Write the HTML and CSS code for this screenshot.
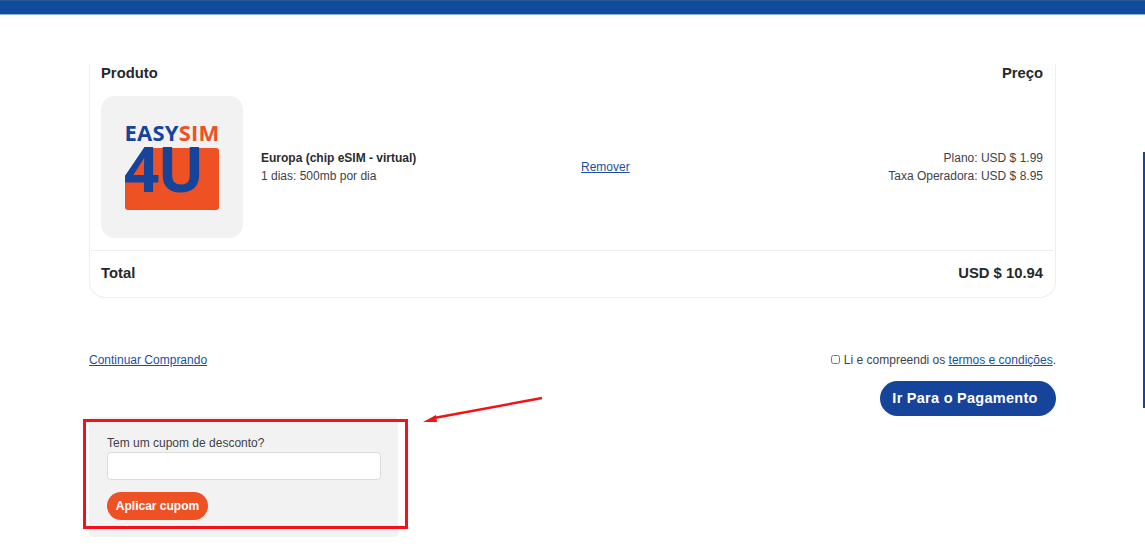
FILE: index.html
```html
<!DOCTYPE html>
<html lang="pt">
<head>
<meta charset="utf-8">
<title>Carrinho</title>
<link rel="stylesheet" href="styles.css">
</head>
<body>
<header class="topbar"></header>
<main class="page">
  <section class="card">
    <div class="row head">
      <span>Produto</span>
      <span>Preço</span>
    </div>
    <div class="item">
      <div class="thumb">
        <svg class="logo" viewBox="0 0 142 142" width="142" height="142" aria-label="EasySim4U">
          <path d="M52 52H115a3 3 0 0 1 3 3V111a3 3 0 0 1-3 3H27a3 3 0 0 1-3-3V80Z" fill="#ee5224"/>
          <text x="23.5" y="45" class="logo-top"><tspan fill="#15449a">EASY</tspan><tspan fill="#ee5224">SIM</tspan></text>
          <text x="23" y="96" class="logo-big" fill="#15449a">4U</text>
        </svg>
      </div>
      <div class="info">
        <strong>Europa (chip eSIM - virtual)</strong>
        <span>1 dias: 500mb por dia</span>
      </div>
      <a class="remove" href="#">Remover</a>
      <div class="prices">
        <span>Plano: USD $ 1.99</span>
        <span>Taxa Operadora: USD $ 8.95</span>
      </div>
    </div>
    <div class="row total">
      <span>Total</span>
      <span>USD $ 10.94</span>
    </div>
  </section>

  <section class="actions">
    <a href="#">Continuar Comprando</a>
    <div class="checkout">
      <label class="terms"><input type="checkbox">Li e compreendi os <a href="#">termos e condições</a>.</label>
      <button class="pay" type="button">Ir Para o Pagamento</button>
    </div>
  </section>

  <section class="coupon">
    <label for="cupom">Tem um cupom de desconto?</label>
    <input id="cupom" type="text">
    <button class="apply" type="button">Aplicar cupom</button>
  </section>
</main>

<div class="edge-line"></div>
<div class="mark-box"></div>
<svg class="mark-arrow" viewBox="0 0 130 30" width="130" height="30" aria-hidden="true">
  <line x1="120" y1="3" x2="12" y2="23" stroke="#f01414" stroke-width="2.4"/>
  <polygon points="1,27 14,20 15,27" fill="#f01414"/>
</svg>
</body>
</html>
```

FILE: styles.css
```css
* { box-sizing: border-box; }

html, body { margin: 0; padding: 0; }

body {
  height: 550px;
  overflow: hidden;
  background: #fff;
  color: #3f4248;
  font-family: "Liberation Sans", Arial, sans-serif;
  font-size: 12px;
  line-height: 18px;
}

a { color: #1c4f9c; text-decoration: underline; }

.topbar {
  height: 15px;
  background: #0f4c9e;
  border-top: 1px solid #2a5a96;
  border-bottom: 1px solid #8fb0d8;
}

.page {
  width: 967px;
  margin: 0 0 0 89px;
  padding-top: 49px;
}

.card {
  height: 234px;
  border: 1px solid #eee;
  border-top: 0;
  border-radius: 0 0 16px 16px;
  padding: 0 1px;
  display: flex;
  flex-direction: column;
}

.row {
  display: flex;
  justify-content: space-between;
  padding: 0 11px 0 10px;
  color: #26282c;
  font-weight: 700;
  font-size: 14.8px;
}

.head { height: 32px; align-items: flex-start; }

.item {
  display: grid;
  grid-template-columns: 142px 338px 1fr auto;
  align-items: center;
  height: 142px;
  padding: 0 11px 0 10px;
}

.thumb {
  width: 142px;
  height: 142px;
  background: #f2f2f2;
  border-radius: 14px;
}

.logo { display: block; }

.logo-top {
  font-family: "Open Sans", sans-serif;
  font-size: 22px;
  font-weight: 700;
  letter-spacing: 0.2px;
}

.logo-big {
  font-family: "Open Sans", sans-serif;
  font-size: 62px;
  font-weight: 700;
  letter-spacing: -2px;
}

.info {
  display: flex;
  flex-direction: column;
  padding-left: 18px;
}

.info strong { color: #2a2c30; }

.remove { justify-self: start; }

.prices {
  display: flex;
  flex-direction: column;
  text-align: right;
}

.total {
  height: 48px;
  margin-top: 12px;
  align-items: center;
  border-top: 1px solid #eee;
  padding-bottom: 1px;
}

.actions {
  display: flex;
  justify-content: space-between;
  align-items: flex-start;
  margin-top: 53px;
}

.checkout {
  display: flex;
  flex-direction: column;
  align-items: flex-end;
}

.terms { display: flex; align-items: center; white-space: pre; }

.terms input {
  width: 9px;
  height: 9px;
  margin: 0 4px 2px 0;
}

.pay {
  width: 176px;
  height: 35px;
  margin-top: 12px;
  padding: 0 6px 1px 0;
  border: 0;
  border-radius: 18px;
  background: #15449a;
  color: #fff;
  font: 700 14.5px "Liberation Sans", Arial, sans-serif;
  letter-spacing: 0.27px;
}

.coupon {
  width: 309px;
  height: 120px;
  margin-top: 1px;
  padding: 17px 18px 0;
  background: #f2f2f2;
  border-radius: 4px;
  display: flex;
  flex-direction: column;
  align-items: flex-start;
}

.coupon label { color: #3f4248; }

.coupon input {
  width: 274px;
  height: 28px;
  border: 1px solid #dcdcdc;
  border-radius: 4px;
  background: #fff;
}

.apply {
  width: 101px;
  height: 28px;
  margin-top: 12px;
  border: 0;
  border-radius: 14px;
  background: #ee5224;
  color: #fff;
  font: 700 12px "Liberation Sans", Arial, sans-serif;
}

.edge-line {
  position: absolute;
  left: 1143px;
  top: 152px;
  width: 2px;
  height: 256px;
  background: #15449a;
}

.mark-box {
  position: absolute;
  left: 83px;
  top: 419px;
  width: 325px;
  height: 110px;
  border: 3px solid #f5101c;
}

.mark-arrow {
  position: absolute;
  left: 422px;
  top: 395px;
}
```
